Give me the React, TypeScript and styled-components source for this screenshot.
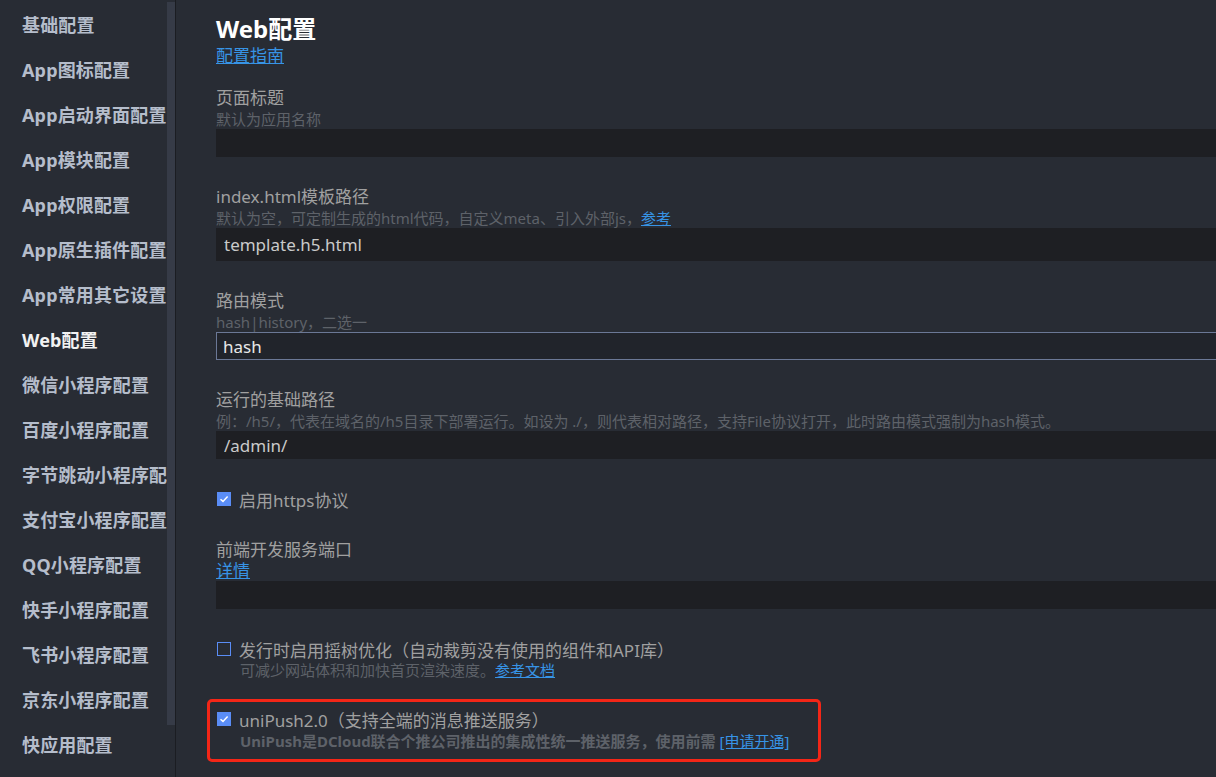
import React from "react";
import styled, { createGlobalStyle } from "styled-components";

const GlobalStyle = createGlobalStyle`
  html, body {
    margin: 0;
    padding: 0;
    background: #282c34;
    overflow: hidden;
  }
  body {
    font-family: "Noto Sans", "Noto Sans CJK SC", sans-serif;
  }
  * { box-sizing: border-box; }
`;

const Page = styled.div`
  display: flex;
  width: 1216px;
  height: 777px;
  overflow: hidden;
  background: #282c34;
`;

const Sidebar = styled.nav`
  display: flex;
  flex: 0 0 176px;
  border-right: 1px solid #1b1d22;
`;

const NavList = styled.ul`
  width: 167px;
  margin: 0;
  padding: 3px 0 0;
  list-style: none;
  overflow: hidden;
`;

const NavItem = styled.li<{ $active?: boolean }>`
  height: 45px;
  line-height: 45px;
  padding-left: 22px;
  font-size: 18px;
  font-weight: 700;
  white-space: nowrap;
  letter-spacing: 0.15px;
  color: ${(p) => (p.$active ? "#f2f2f2" : "#b5bdcb")};
`;

const ScrollTrack = styled.div`
  width: 8px;
  padding-top: 2px;
`;

const ScrollThumb = styled.div`
  height: 723px;
  background: #363b47;
`;

const Main = styled.main`
  flex: 1;
  min-width: 0;
  padding: 12px 0 0 40px;
  overflow: hidden;
`;

const Title = styled.h1`
  margin: 0;
  font-size: 24px;
  line-height: 34px;
  font-weight: 700;
  color: #ffffff;
`;

const Link = styled.a`
  color: #3794e6;
  text-decoration: underline;
  cursor: pointer;
  font-weight: 400;
`;

const BlockLink = styled(Link)`
  display: block;
  width: fit-content;
  font-size: 17px;
  line-height: 20px;
`;

const Field = styled.section<{ $first?: boolean }>`
  margin-top: ${(p) => (p.$first ? "21px" : "29px")};
`;

const Label = styled.div`
  font-size: 17px;
  line-height: 22px;
  color: #a0a0a0;
  white-space: nowrap;
`;

const Hint = styled.div<{ $indent?: boolean; $bold?: boolean; $tall?: boolean }>`
  font-size: 15px;
  line-height: ${(p) => (p.$tall ? "22px" : "20px")};
  color: #5e6269;
  white-space: nowrap;
  padding-left: ${(p) => (p.$indent ? "24px" : "0")};
  font-weight: ${(p) => (p.$bold ? 700 : 400)};
`;

const Input = styled.input<{ $tall?: boolean; $bordered?: boolean }>`
  display: block;
  width: 100%;
  height: ${(p) => (p.$tall ? "33px" : "28px")};
  margin: 0;
  padding: 0 ${(p) => (p.$bordered ? "6px" : "8px")};
  border: ${(p) => (p.$bordered ? "1px solid #6b7896" : "none")};
  border-right: none;
  background: ${(p) => (p.$bordered ? "#21242b" : "#1e1f23")};
  color: ${(p) => (p.$bordered ? "#e8e8e8" : "#cacaca")};
  font-family: inherit;
  font-size: 17px;
  outline: none;
`;

const CheckRow = styled.label`
  display: flex;
  align-items: center;
  gap: 8px;
  height: 22px;
  font-size: 17px;
  color: #a0a0a0;
  white-space: nowrap;
`;

const Box = styled.span<{ $checked?: boolean }>`
  display: inline-flex;
  align-items: center;
  justify-content: center;
  width: 14px;
  height: 14px;
  margin-left: 1px;
  background: ${(p) => (p.$checked ? "#5a8df6" : "transparent")};
  border: ${(p) => (p.$checked ? "none" : "1px solid #5a8df6")};
`;

const Highlight = styled.section`
  width: 614px;
  margin: 19px 0 0 -9px;
  padding: 6px 6px 7px;
  border: 3px solid #f42617;
  border-radius: 5px;
`;

const CheckMark = () => (
  <svg width="10" height="8" viewBox="0 0 10 8">
    <path d="M1.5 4.2 L4 6.4 L8.6 1.6" fill="none" stroke="#fff" strokeWidth="1.5" />
  </svg>
);

const Checkbox = ({ checked }: { checked?: boolean }) => (
  <Box $checked={checked}>{checked && <CheckMark />}</Box>
);

const navItems = [
  "基础配置",
  "App图标配置",
  "App启动界面配置",
  "App模块配置",
  "App权限配置",
  "App原生插件配置",
  "App常用其它设置",
  "Web配置",
  "微信小程序配置",
  "百度小程序配置",
  "字节跳动小程序配置",
  "支付宝小程序配置",
  "QQ小程序配置",
  "快手小程序配置",
  "飞书小程序配置",
  "京东小程序配置",
  "快应用配置",
];

export default function App() {
  return (
    <>
      <GlobalStyle />
      <Page>
        <Sidebar>
          <NavList>
            {navItems.map((t) => (
              <NavItem key={t} $active={t === "Web配置"}>
                {t}
              </NavItem>
            ))}
          </NavList>
          <ScrollTrack>
            <ScrollThumb />
          </ScrollTrack>
        </Sidebar>
        <Main>
          <Title>Web配置</Title>
          <BlockLink>配置指南</BlockLink>

          <Field $first>
            <Label>页面标题</Label>
            <Hint>默认为应用名称</Hint>
            <Input readOnly defaultValue="" />
          </Field>

          <Field>
            <Label>index.html模板路径</Label>
            <Hint>
              默认为空，可定制生成的html代码，自定义meta、引入外部js，<Link>参考</Link>
            </Hint>
            <Input $tall readOnly defaultValue="template.h5.html" />
          </Field>

          <Field>
            <Label>路由模式</Label>
            <Hint>hash|history，二选一</Hint>
            <Input $bordered readOnly defaultValue="hash" />
          </Field>

          <Field>
            <Label>运行的基础路径</Label>
            <Hint>
              例：/h5/，代表在域名的/h5目录下部署运行。如设为 ./，则代表相对路径，支持File协议打开，此时路由模式强制为hash模式。
            </Hint>
            <Input readOnly defaultValue="/admin/" />
          </Field>

          <Field>
            <CheckRow>
              <Checkbox checked />
              启用https协议
            </CheckRow>
          </Field>

          <Field>
            <Label>前端开发服务端口</Label>
            <BlockLink>详情</BlockLink>
            <Input readOnly defaultValue="" />
          </Field>

          <Field>
            <CheckRow>
              <Checkbox />
              发行时启用摇树优化（自动裁剪没有使用的组件和API库）
            </CheckRow>
            <Hint $indent>
              可减少网站体积和加快首页渲染速度。<Link>参考文档</Link>
            </Hint>
          </Field>

          <Highlight>
            <CheckRow>
              <Checkbox checked />
              uniPush2.0（支持全端的消息推送服务）
            </CheckRow>
            <Hint $indent $bold $tall>
              UniPush是DCloud联合个推公司推出的集成性统一推送服务，使用前需 <Link>[申请开通]</Link>
            </Hint>
          </Highlight>
        </Main>
      </Page>
    </>
  );
}
